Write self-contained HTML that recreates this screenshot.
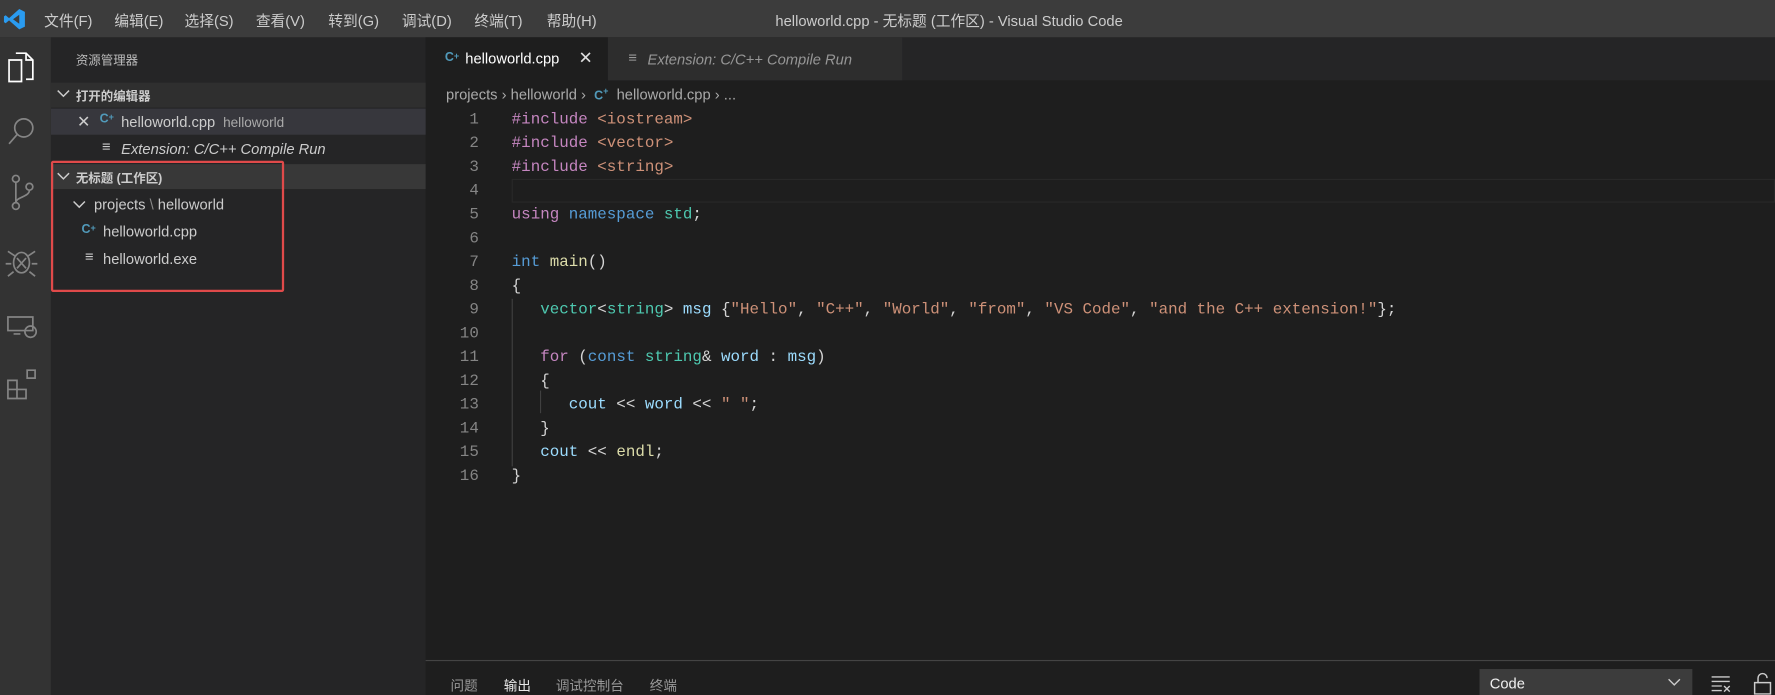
<!DOCTYPE html>
<html><head><meta charset="utf-8"><style>
*{margin:0;padding:0;box-sizing:border-box}
html,body{width:1775px;height:695px;overflow:hidden;background:#1e1e1e}
#w{position:absolute;left:0;top:0;width:1568px;height:614px;transform:scale(1.13202);transform-origin:0 0;font-family:"Liberation Sans","Noto Sans CJK SC",sans-serif;color:#ccc}
.a{position:absolute}
.t{font-size:13px;white-space:nowrap}
.mono{font-family:"Liberation Mono","DejaVu Sans Mono",monospace;font-size:14px;white-space:pre}
.ln{position:absolute;left:376px;width:47px;text-align:right;color:#858585}
.cl{position:absolute;left:452px;color:#d4d4d4}
.k{color:#c586c0}.s{color:#ce9178}.b{color:#569cd6}.g{color:#4ec9b0}.v{color:#9cdcfe}.f{color:#dcdcaa}
</style></head><body><div id="w">
<div class="a" style="left:0;top:0;width:1568px;height:33px;background:#3c3c3c"></div>
<svg class="a" style="left:3px;top:7px" width="20" height="20" viewBox="0 0 20 20"><path d="M14 1 L19 3.5 V16.5 L14 19 L5 11 L2 13.5 L0.5 12.5 V7.5 L2 6.5 L5 9 Z M14 6 L8.5 10 L14 14 Z" fill="#2a9bf0" fill-rule="evenodd"/></svg>
<div class="a t" style="left:39px;top:8px">文件(F)</div>
<div class="a t" style="left:101px;top:8px">编辑(E)</div>
<div class="a t" style="left:163px;top:8px">选择(S)</div>
<div class="a t" style="left:226px;top:8px">查看(V)</div>
<div class="a t" style="left:290px;top:8px">转到(G)</div>
<div class="a t" style="left:355px;top:8px">调试(D)</div>
<div class="a t" style="left:419px;top:8px">终端(T)</div>
<div class="a t" style="left:483px;top:8px">帮助(H)</div>
<div class="a t" style="left:685px;top:8px">helloworld.cpp - 无标题 (工作区) - Visual Studio Code</div>
<div class="a" style="left:0;top:33px;width:45px;height:581px;background:#333"></div>
<svg class="a" style="left:0;top:33px" width="45" height="340" viewBox="0 0 45 340" fill="none" stroke-width="1.5">
<g stroke="#fff"><path d="M14 14h9l6 6v17h-6"/><path d="M8 20h11v19H8z"/><path d="M23 14v6h6"/></g>
<g stroke="#858585">
<circle cx="21" cy="80" r="8"/><path d="M15 86l-7 8"/>
<circle cx="14" cy="125" r="3"/><circle cx="14" cy="149" r="3"/><circle cx="26" cy="132" r="3"/><path d="M14 128v18M26 135c0 6-12 6-12 11"/>
<ellipse cx="19" cy="199" rx="7" ry="9"/><path d="M13 193l-6-4M25 193l6-4M10 200H5M28 200h5M12 207l-5 4M26 207l5 4M15 195l8 9M23 195l-8 9"/>
<path d="M7 247h22v12H7z M12 262h6"/><circle cx="27" cy="260" r="5"/>
<path d="M7 311h8v8H7zM15 311h8v8h-8zM7 303h8v8H7zM24 294h7v7h-7z"/>
</g></svg>
<div class="a" style="left:45px;top:33px;width:331px;height:581px;background:#252526"></div>
<div class="a t" style="left:67px;top:45px;font-size:11px;color:#bbb">资源管理器</div>
<div class="a" style="left:45px;top:73px;width:331px;height:22px;background:#2f2f2f"></div>
<svg class="a" style="left:50px;top:79px" width="12" height="8"><path d="M1 1l5 5 5-5" stroke="#ccc" fill="none" stroke-width="1.3"/></svg>
<div class="a t" style="left:67px;top:77px;font-size:11px;font-weight:bold">打开的编辑器</div>
<div class="a" style="left:45px;top:96px;width:331px;height:23px;background:#37373d"></div>
<div class="a t" style="left:68px;top:99px;font-size:14px">✕</div>
<div class="a t" style="left:88px;top:99px;color:#519aba;font-weight:bold;font-size:11px">C<span style="font-size:8px;vertical-align:top">+</span></div>
<div class="a t" style="left:107px;top:100px">helloworld.cpp <span style="font-size:12px;color:#aaa">&nbsp;helloworld</span></div>
<div class="a t" style="left:90px;top:122px;font-size:13px">≡</div>
<div class="a t" style="left:107px;top:124px;font-style:italic">Extension: C/C++ Compile Run</div>
<div class="a" style="left:45px;top:145px;width:331px;height:22px;background:#383838"></div>
<svg class="a" style="left:50px;top:152px" width="12" height="8"><path d="M1 1l5 5 5-5" stroke="#ccc" fill="none" stroke-width="1.3"/></svg>
<div class="a t" style="left:67px;top:149px;font-size:11px;font-weight:bold">无标题 (工作区)</div>
<svg class="a" style="left:64px;top:177px" width="12" height="8"><path d="M1 1l5 5 5-5" stroke="#ccc" fill="none" stroke-width="1.3"/></svg>
<div class="a t" style="left:83px;top:173px">projects <span style="color:#888">\</span> helloworld</div>
<div class="a t" style="left:72px;top:197px;color:#519aba;font-weight:bold;font-size:11px">C<span style="font-size:8px;vertical-align:top">+</span></div>
<div class="a t" style="left:91px;top:197px">helloworld.cpp</div>
<div class="a t" style="left:75px;top:219px">≡</div>
<div class="a t" style="left:91px;top:221px">helloworld.exe</div>
<div class="a" style="left:45px;top:142px;width:206px;height:116px;border:2px solid #e04a4a;border-radius:2px"></div>
<div class="a" style="left:376px;top:33px;width:1192px;height:38px;background:#252526"></div>
<div class="a" style="left:376px;top:33px;width:161px;height:38px;background:#1e1e1e"></div>
<div class="a" style="left:537px;top:33px;width:260px;height:38px;background:#2d2d2d"></div>
<div class="a t" style="left:393px;top:45px;color:#519aba;font-weight:bold;font-size:11px">C<span style="font-size:8px;vertical-align:top">+</span></div>
<div class="a t" style="left:411px;top:44px;color:#fff">helloworld.cpp</div>
<div class="a t" style="left:511px;top:42px;font-size:15px;color:#ddd">✕</div>
<div class="a t" style="left:555px;top:43px;color:#999">≡</div>
<div class="a t" style="left:572px;top:45px;font-style:italic;color:#969696">Extension: C/C++ Compile Run</div>
<div class="a t" style="left:394px;top:76px;color:#aaa">projects <span>›</span> helloworld <span>›</span> &nbsp;<b style="color:#519aba;font-size:11px">C<span style="font-size:8px;vertical-align:top">+</span></b> &nbsp;helloworld.cpp <span>›</span> ...</div>
<div class="a" style="left:452px;top:158px;width:1116px;height:21px;border:1px solid #282828"></div>
<div class="a" style="left:452px;top:264px;width:1px;height:148px;background:#404040"></div>
<div class="a" style="left:477px;top:345px;width:1px;height:20px;background:#404040"></div>
<div class="mono" style="position:absolute;left:0;top:2px">
<div class="ln" style="top:96px">1</div><div class="cl" style="top:96px"><span class="k">#include</span> <span class="s">&lt;iostream&gt;</span></div>
<div class="ln" style="top:117px">2</div><div class="cl" style="top:117px"><span class="k">#include</span> <span class="s">&lt;vector&gt;</span></div>
<div class="ln" style="top:138px">3</div><div class="cl" style="top:138px"><span class="k">#include</span> <span class="s">&lt;string&gt;</span></div>
<div class="ln" style="top:159px">4</div>
<div class="ln" style="top:180px">5</div><div class="cl" style="top:180px"><span class="k">using</span> <span class="b">namespace</span> <span class="g">std</span>;</div>
<div class="ln" style="top:201px">6</div>
<div class="ln" style="top:222px">7</div><div class="cl" style="top:222px"><span class="b">int</span> <span class="f">main</span>()</div>
<div class="ln" style="top:243px">8</div><div class="cl" style="top:243px">{</div>
<div class="ln" style="top:264px">9</div><div class="cl" style="top:264px">   <span class="g">vector</span>&lt;<span class="g">string</span>&gt; <span class="v">msg</span> {<span class="s">"Hello"</span>, <span class="s">"C++"</span>, <span class="s">"World"</span>, <span class="s">"from"</span>, <span class="s">"VS Code"</span>, <span class="s">"and the C++ extension!"</span>};</div>
<div class="ln" style="top:285px">10</div>
<div class="ln" style="top:306px">11</div><div class="cl" style="top:306px">   <span class="k">for</span> (<span class="b">const</span> <span class="g">string</span>&amp; <span class="v">word</span> : <span class="v">msg</span>)</div>
<div class="ln" style="top:327px">12</div><div class="cl" style="top:327px">   {</div>
<div class="ln" style="top:348px">13</div><div class="cl" style="top:348px">      <span class="v">cout</span> &lt;&lt; <span class="v">word</span> &lt;&lt; <span class="s">" "</span>;</div>
<div class="ln" style="top:369px">14</div><div class="cl" style="top:369px">   }</div>
<div class="ln" style="top:390px">15</div><div class="cl" style="top:390px">   <span class="v">cout</span> &lt;&lt; <span class="f">endl</span>;</div>
<div class="ln" style="top:411px">16</div><div class="cl" style="top:411px">}</div>
</div>
<div class="a" style="left:376px;top:583px;width:1192px;height:1px;background:#444"></div>
<div class="a t" style="left:398px;top:597px;font-size:12px;color:#999">问题</div>
<div class="a t" style="left:445px;top:597px;font-size:12px;color:#e7e7e7">输出</div>
<div class="a t" style="left:491px;top:597px;font-size:12px;color:#999">调试控制台</div>
<div class="a t" style="left:574px;top:597px;font-size:12px;color:#999">终端</div>
<div class="a" style="left:1307px;top:591px;width:188px;height:23px;background:#3c3c3c"></div>
<div class="a t" style="left:1316px;top:596px;color:#f0f0f0">Code</div>
<svg class="a" style="left:1473px;top:599px" width="12" height="8"><path d="M1 1l5 5 5-5" stroke="#ccc" fill="none" stroke-width="1.2"/></svg>
<svg class="a" style="left:1511px;top:596px" width="20" height="16" stroke="#ccc" fill="none" stroke-width="1.2"><path d="M1 2h16M1 6h16M1 10h9M1 14h9M12 10l5 5M17 10l-5 5"/></svg>
<svg class="a" style="left:1548px;top:593px" width="18" height="21" stroke="#ccc" fill="none" stroke-width="1.3"><path d="M2 10h14v10H2z M5 10V6a4 4 0 0 1 8 0"/></svg>
</div></body></html>
